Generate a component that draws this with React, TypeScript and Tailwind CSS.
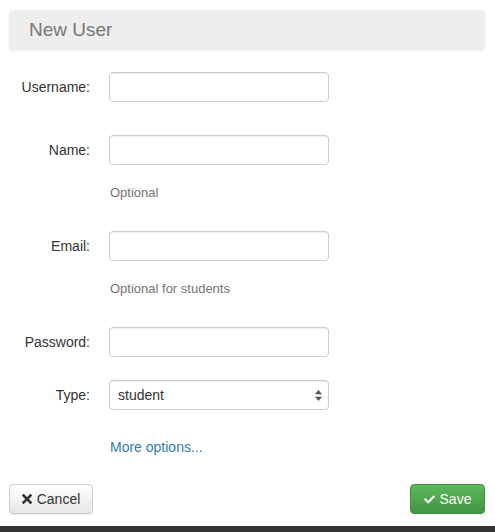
import { FaCheck } from "react-icons/fa";

const FONT = { fontFamily: '"Liberation Sans", Arial, sans-serif' };

function Field({ label, className = "" }: { label: string; className?: string }) {
  return (
    <div className={`flex items-center ${className}`}>
      <label className="w-[90px] text-right text-[14px] text-[#333]">{label}</label>
      <input
        type="text"
        className="ml-[19px] w-[220px] h-[30px] rounded-[4px] border border-[#cccccc] bg-white px-2 text-[14px] text-[#555] shadow-[inset_0_1px_1px_rgba(0,0,0,0.075)] outline-none"
      />
    </div>
  );
}

function Help({ text, className = "" }: { text: string; className?: string }) {
  return (
    <p className={`ml-[110px] text-[13px] leading-[18px] text-[#737373] ${className}`}>{text}</p>
  );
}

export default function App() {
  return (
    <div className="w-[495px] h-[532px] bg-white flex flex-col overflow-hidden" style={FONT}>
      <div className="mt-[10px] ml-[9px] mr-[10px] h-[40px] shrink-0 rounded-[4px] bg-[#eeeeee] shadow-[0_1px_2px_rgba(0,0,0,0.08)] flex items-center pl-[20px]">
        <h1 className="text-[19px] text-[#777]">New User</h1>
      </div>

      <form className="flex flex-col">
        <Field label="Username:" className="mt-[22px]" />
        <Field label="Name:" className="mt-[33px]" />
        <Help text="Optional" className="mt-[19px]" />
        <Field label="Email:" className="mt-[29px]" />
        <Help text="Optional for students" className="mt-[19px]" />
        <Field label="Password:" className="mt-[29px]" />

        <div className="flex items-center mt-[23px]">
          <label className="w-[90px] text-right text-[14px] text-[#333]">Type:</label>
          <div className="relative ml-[19px] w-[220px] h-[30px] rounded-[4px] border border-[#cccccc] bg-white shadow-[inset_0_1px_1px_rgba(0,0,0,0.075)] flex items-center pl-[8px]">
            <span className="text-[14px] text-[#333]">student</span>
            <svg className="absolute right-[6px] top-[9px]" width="7" height="11" viewBox="0 0 7 11">
              <path d="M3.5 0 L7 4.3 H0 Z" fill="#555" />
              <path d="M3.5 11 L7 6.7 H0 Z" fill="#555" />
            </svg>
          </div>
        </div>

        <a className="ml-[110px] mt-[27px] text-[14px] leading-[20px] text-[#337ab7]" href="#">
          More options...
        </a>

        <div className="flex justify-between mt-[27px] ml-[9px] mr-[10px]">
          <button
            type="button"
            className="h-[30px] w-[84px] rounded-[4px] border border-[#cccccc] bg-gradient-to-b from-white to-[#e6e6e6] text-[14px] text-[#333] shadow-[0_1px_1px_rgba(0,0,0,0.075)] flex items-center justify-center gap-[5px]"
          >
            <svg width="10" height="10" viewBox="0 0 10 10">
              <path d="M1.5 1.5 L8.5 8.5 M8.5 1.5 L1.5 8.5" stroke="#333" strokeWidth="2.6" strokeLinecap="square" />
            </svg>
            Cancel
          </button>
          <button
            type="button"
            className="h-[30px] w-[75px] rounded-[4px] border border-[#3e8f3e] bg-gradient-to-b from-[#5cb85c] to-[#419641] text-[14px] text-white flex items-center justify-center gap-[5px]"
          >
            <FaCheck className="w-[11px] h-[11px]" />
            Save
          </button>
        </div>
      </form>

      <div className="mt-[12px] h-[8px] shrink-0 bg-[#333]" />
    </div>
  );
}
